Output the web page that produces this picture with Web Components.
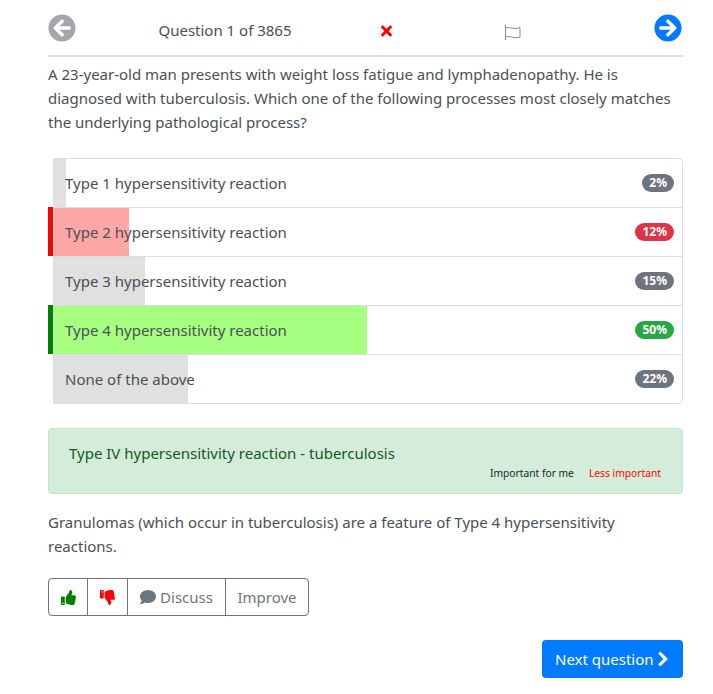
<!DOCTYPE html>
<html lang="en">
<head>
<meta charset="utf-8">
<title>Question 1 of 3865</title>
<style>
  html, body { margin: 0; background: #fff; }
  body {
    font-family: "Noto Sans", "Open Sans", sans-serif;
    font-size: 15px;
    line-height: 24px;
    color: #495057;
  }
  main { display: block; width: 635px; margin-left: 48px; padding-top: 13px; }
  p { margin: 0; }
  .question { margin: 5px 0 24px; }
  .explain { margin: 16px 0 20px; }
</style>
</head>
<body>
<main>
  <quiz-nav>Question 1 of 3865</quiz-nav>
  <p class="question">A 23-year-old man presents with weight loss fatigue and lymphadenopathy. He is diagnosed with tuberculosis. Which one of the following processes most closely matches the underlying pathological process?</p>
  <answer-list>
    <answer-row fill="1.9" pct="2%">Type 1 hypersensitivity reaction</answer-row>
    <answer-row fill="12" pct="12%" state="wrong">Type 2 hypersensitivity reaction</answer-row>
    <answer-row fill="14.5" pct="15%">Type 3 hypersensitivity reaction</answer-row>
    <answer-row fill="49.8" pct="50%" state="right">Type 4 hypersensitivity reaction</answer-row>
    <answer-row fill="21.3" pct="22%">None of the above</answer-row>
  </answer-list>
  <feedback-alert>Type IV hypersensitivity reaction - tuberculosis</feedback-alert>
  <p class="explain">Granulomas (which occur in tuberculosis) are a feature of Type 4 hypersensitivity reactions.</p>
  <vote-bar></vote-bar>
  <next-button>Next question</next-button>
</main>

<script>
// font awesome 5 shapes, drawn inline
const ICONS = {
  left: ['0 0 512 512', 'M256 504C119 504 8 393 8 256S119 8 256 8s248 111 248 248-111 248-248 248zm28.9-143.6L209.4 288H392c13.3 0 24-10.7 24-24v-16c0-13.3-10.7-24-24-24H209.4l75.5-72.4c9.7-9.3 9.9-24.8.4-34.3l-11-10.9c-9.4-9.4-24.6-9.4-33.9 0L107.7 239c-9.4 9.4-9.4 24.6 0 33.9l132.7 132.7c9.4 9.4 24.6 9.4 33.9 0l11-10.9c9.5-9.5 9.3-25-.4-34.3z'],
  right: ['0 0 512 512', 'M256 8c137 0 248 111 248 248S393 504 256 504 8 393 8 256 119 8 256 8zm-28.9 143.6l75.5 72.4H120c-13.3 0-24 10.7-24 24v16c0 13.3 10.7 24 24 24h182.6l-75.5 72.4c-9.7 9.3-9.9 24.8-.4 34.3l11 10.9c9.4 9.4 24.6 9.4 33.9 0L404.3 273c9.4-9.4 9.4-24.6 0-33.9L271.6 106.3c-9.4-9.4-24.6-9.4-33.9 0l-11 10.9c-9.5 9.6-9.3 25.1.4 34.4z'],
  times: ['0 0 352 512', 'M242.72 256l100.07-100.07c12.28-12.28 12.28-32.19 0-44.48l-22.24-22.24c-12.28-12.28-32.19-12.28-44.48 0L176 189.28 75.93 89.21c-12.28-12.28-32.19-12.28-44.48 0L9.21 111.45c-12.28 12.28-12.28 32.19 0 44.48L109.28 256 9.21 356.07c-12.28 12.28-12.28 32.19 0 44.48l22.24 22.24c12.28 12.28 32.2 12.28 44.48 0L176 322.72l100.07 100.07c12.28 12.28 32.2 12.28 44.48 0l22.24-22.24c12.28-12.28 12.28-32.19 0-44.48L242.72 256z'],
  thumb: ['0 0 512 512', 'M104 224H24c-13.255 0-24 10.745-24 24v240c0 13.255 10.745 24 24 24h80c13.255 0 24-10.745 24-24V248c0-13.255-10.745-24-24-24zM64 472c-13.255 0-24-10.745-24-24s10.745-24 24-24 24 10.745 24 24-10.745 24-24 24zM384 81.452c0 42.416-25.97 66.208-33.277 94.548h101.723c33.397 0 59.397 27.746 59.553 58.098.084 17.938-7.546 37.249-19.439 49.197l-.11.11c9.836 23.337 8.237 56.037-9.308 79.469 8.681 25.895-.069 57.704-16.382 74.757 4.298 17.598 2.244 32.575-6.148 44.632C440.202 511.587 389.616 512 346.839 512l-2.845-.001c-48.287-.017-87.806-17.598-119.56-31.725-15.957-7.099-36.821-15.887-52.651-16.178-6.54-.12-11.783-5.457-11.783-11.998v-213.77c0-3.2 1.282-6.271 3.558-8.521 39.614-39.144 56.648-80.587 89.117-113.111 14.804-14.832 20.188-37.236 25.393-58.902C282.515 39.293 291.817 0 312 0c24 0 72 8 72 81.452z'],
  comment: ['0 0 512 512', 'M256 32C114.6 32 0 125.1 0 240c0 49.6 21.4 95 57 130.7C44.5 421.1 2.7 466 2.2 466.5c-2.2 2.3-2.8 5.7-1.5 8.7S4.8 480 8 480c66.3 0 116-31.8 140.6-51.4 32.7 12.3 69 19.4 107.4 19.4 141.4 0 256-93.1 256-208S397.4 32 256 32z'],
  chevron: ['0 0 320 512', 'M285.476 272.971L91.132 467.314c-9.373 9.373-24.569 9.373-33.941 0l-22.667-22.667c-9.357-9.357-9.375-24.522-.04-33.901L188.505 256 34.484 101.255c-9.335-9.379-9.317-24.544.04-33.901l22.667-22.667c9.373-9.373 24.569-9.373 33.941 0L285.475 239.03c9.373 9.372 9.373 24.568.001 33.941z']
};

function icon(name, height, color) {
  const [box, d] = ICONS[name];
  const w = box.split(' ')[2] / 512 * height;
  return `<svg width="${w}" height="${height}" viewBox="${box}" style="display:block"><path fill="${color}" d="${d}"/></svg>`;
}

class QuizNav extends HTMLElement {
  connectedCallback() {
    this.attachShadow({ mode: 'open' });
    this.shadowRoot.innerHTML = `
      <style>
        :host { display: block; border-bottom: 2px solid #ddd; }
        .row {
          display: grid;
          grid-template-columns: 28px 298px 24px 230px 1fr;
          align-items: center;
          height: 28px;
          padding-bottom: 14px;
        }
        .mid { justify-self: center; padding-top: 6px; }
        .label { padding-top: 5px; }
        .flag { padding: 8px 1px 0 0; }
        .end { justify-self: end; margin-right: 1px; }
      </style>
      <div class="row">
        ${icon('left', 28, '#a3a6aa')}
        <span class="mid label"><slot></slot></span>
        <span class="mid">${icon('times', 16, '#ff0000')}</span>
        <span class="mid flag">
          <svg width="17" height="16" viewBox="0 0 17 16" style="display:block" fill="none" stroke="#858b91">
            <path d="M1.5 1V16"/>
            <path d="M2 4C6 2.5 10 6 16 3.5V13C10 15 6 11.5 2 13"/>
          </svg>
        </span>
        <span class="end">${icon('right', 28, '#007bff')}</span>
      </div>
    `;
  }
}
customElements.define('quiz-nav', QuizNav);

class AnswerList extends HTMLElement {
  connectedCallback() {
    this.attachShadow({ mode: 'open' });
    this.shadowRoot.innerHTML = `
      <style>
        :host {
          display: block;
          margin-left: 5px;
          border: 1px solid #ddd;
          border-radius: 0 4px 4px 0;
        }
        ::slotted(answer-row:not(:first-child)) { border-top: 1px solid #ddd; }
      </style>
      <slot></slot>
    `;
  }
}
customElements.define('answer-list', AnswerList);

class AnswerRow extends HTMLElement {
  connectedCallback() {
    const state = this.getAttribute('state');
    const fill = this.getAttribute('fill');
    const look = {
      wrong: ['#ffa6a6', '#dc3545', '#ff0000'],
      right: ['#a6ff80', '#28a745', '#008000']
    }[state] || ['#e0e0e0', '#6c757d', null];
    this.attachShadow({ mode: 'open' });
    this.shadowRoot.innerHTML = `
      <style>
        :host {
          display: flex;
          position: relative;
          align-items: center;
          justify-content: space-between;
          height: 48px;
          padding: 0 8px 0 11px;
          background: linear-gradient(to right, ${look[0]} ${fill}%, transparent ${fill}%);
        }
        /* coloured marker hangs over the left edge of the list */
        :host::before {
          content: '';
          display: ${look[2] ? 'block' : 'none'};
          position: absolute;
          left: -6px;
          top: -1px;
          bottom: 0;
          width: 5px;
          background: ${look[2]};
        }
        .badge {
          background: ${look[1]};
          color: #fff;
          font-size: 12px;
          font-weight: 700;
          line-height: 18px;
          height: 18px;
          padding: 0 7px;
          border-radius: 10px;
        }
      </style>
      <span><slot></slot></span>
      <span class="badge">${this.getAttribute('pct')}</span>
    `;
  }
}
customElements.define('answer-row', AnswerRow);

class FeedbackAlert extends HTMLElement {
  connectedCallback() {
    this.attachShadow({ mode: 'open' });
    this.shadowRoot.innerHTML = `
      <style>
        :host {
          display: block;
          margin-top: 24px;
          height: 64px;
          background: #d4edda;
          border: 1px solid #c3e6cb;
          border-radius: 4px;
          color: #155724;
        }
        .title { padding: 12px 20px 0; }
        .links {
          display: flex;
          justify-content: flex-end;
          gap: 15px;
          padding-right: 21px;
          font-size: 10.25px;
          line-height: 14px;
          margin-top: 1px;
        }
        .me { color: #212529; }
        .less { color: #ff0000; }
      </style>
      <div class="title"><slot></slot></div>
      <div class="links"><span class="me">Important for me</span><span class="less">Less important</span></div>
    `;
  }
}
customElements.define('feedback-alert', FeedbackAlert);

class VoteBar extends HTMLElement {
  connectedCallback() {
    this.attachShadow({ mode: 'open' });
    this.shadowRoot.innerHTML = `
      <style>
        :host {
          display: inline-flex;
          vertical-align: top;
          height: 36px;
          border: 1px solid #6c757d;
          border-radius: 4px;
          color: #6c757d;
        }
        span {
          display: flex;
          align-items: center;
          justify-content: center;
          gap: 4px;
          border-left: 1px solid #6c757d;
        }
        .up { border-left: 0; width: 38px; }
        .down { width: 39px; }
        .down svg { transform: rotate(180deg) scaleX(-1); }
        .discuss { width: 97px; }
        .improve { width: 82px; }
      </style>
      <span class="up">${icon('thumb', 15, '#008000')}</span>
      <span class="down">${icon('thumb', 15, '#ff0000')}</span>
      <span class="discuss">${icon('comment', 16, '#6c757d')}Discuss</span>
      <span class="improve">Improve</span>
    `;
  }
}
customElements.define('vote-bar', VoteBar);

class NextButton extends HTMLElement {
  connectedCallback() {
    this.attachShadow({ mode: 'open' });
    this.shadowRoot.innerHTML = `
      <style>
        :host { display: flex; justify-content: flex-end; margin-top: 24px; }
        button {
          display: flex;
          align-items: center;
          gap: 4px;
          height: 38px;
          width: 141px;
          padding: 0 0 0 13px;
          border: 0;
          border-radius: 4px;
          background: #007bff;
          color: #fff;
          font: inherit;
        }
        svg path { stroke: #fff; stroke-width: 30; }
      </style>
      <button><slot></slot>${icon('chevron', 16, '#fff')}</button>
    `;
  }
}
customElements.define('next-button', NextButton);
</script>
</body>
</html>
